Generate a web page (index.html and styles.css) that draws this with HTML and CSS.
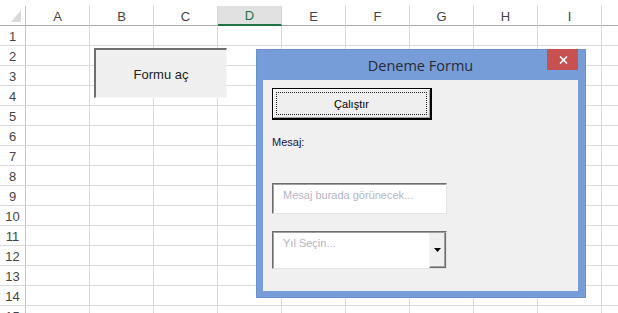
FILE: index.html
```html
<!DOCTYPE html>
<html lang="tr">
<head>
<meta charset="utf-8">
<title>Deneme Formu</title>
<link rel="stylesheet" href="styles.css">
</head>
<body>
<div class="sheet">
  <div class="colheads">
    <div class="corner">
      <svg width="11" height="14" viewBox="0 0 11 14"><polygon points="10,1 10,13 0,13" fill="#dadada"/></svg>
    </div>
    <div class="ch">A</div>
    <div class="ch">B</div>
    <div class="ch">C</div>
    <div class="ch active">D</div>
    <div class="ch">E</div>
    <div class="ch">F</div>
    <div class="ch">G</div>
    <div class="ch">H</div>
    <div class="ch">I</div>
    <div class="ch rest"></div>
  </div>
  <div class="row"><div class="rh">1</div><div class="cells"></div></div>
  <div class="row"><div class="rh">2</div><div class="cells"></div></div>
  <div class="row"><div class="rh">3</div><div class="cells"></div></div>
  <div class="row"><div class="rh">4</div><div class="cells"></div></div>
  <div class="row"><div class="rh">5</div><div class="cells"></div></div>
  <div class="row"><div class="rh">6</div><div class="cells"></div></div>
  <div class="row"><div class="rh">7</div><div class="cells"></div></div>
  <div class="row"><div class="rh">8</div><div class="cells"></div></div>
  <div class="row"><div class="rh">9</div><div class="cells"></div></div>
  <div class="row"><div class="rh">10</div><div class="cells"></div></div>
  <div class="row"><div class="rh">11</div><div class="cells"></div></div>
  <div class="row"><div class="rh">12</div><div class="cells"></div></div>
  <div class="row"><div class="rh">13</div><div class="cells"></div></div>
  <div class="row"><div class="rh">14</div><div class="cells"></div></div>
  <div class="row"><div class="rh">15</div><div class="cells"></div></div>
</div>

<div class="launch">Formu aç</div>

<div class="window">
  <div class="titlebar">
    <span class="title">Deneme Formu</span>
    <div class="close">
      <svg width="9" height="8" viewBox="0 0 9 8"><path d="M1 0.5 L8 7.5 M8 0.5 L1 7.5" stroke="#fff" stroke-width="1.6" fill="none"/></svg>
    </div>
  </div>
  <div class="client">
    <div class="run"><span class="focus">Çalıştır</span></div>
    <div class="label">Mesaj:</div>
    <div class="textbox">Mesaj burada görünecek...</div>
    <div class="combo">
      <div class="combo-text">Yıl Seçin...</div>
      <div class="combo-btn">
        <svg width="7" height="4" viewBox="0 0 7 4"><polygon points="0,0 7,0 3.5,4" fill="#000"/></svg>
      </div>
    </div>
  </div>
</div>
</body>
</html>
```

FILE: styles.css
```css
* { box-sizing: border-box; }

html, body {
  margin: 0;
  padding: 0;
  background: #fff;
  width: 618px;
  height: 313px;
  overflow: hidden;
}

.sheet {
  padding-top: 6px;
  font-family: "Liberation Sans", Arial, sans-serif;
  font-size: 13px;
  color: #444;
}

.colheads {
  display: grid;
  grid-template-columns: 26px repeat(9, 64px) 1fr;
  height: 20px;
}

.corner {
  border-right: 1px solid #c6c6c6;
  border-bottom: 1px solid #ababab;
  display: flex;
  justify-content: flex-end;
  align-items: flex-start;
  padding: 3px 3px 0 0;
}

.ch {
  border-right: 1px solid #d6d6d6;
  border-bottom: 1px solid #ababab;
  display: flex;
  align-items: center;
  justify-content: center;
  padding-top: 1px;
}

.ch.rest { border-right: none; }

.ch.active {
  background: #e1e1e1;
  color: #217346;
  border-bottom: 2px solid #217346;
}

.row {
  display: flex;
  height: 20px;
  border-bottom: 1px solid #dadada;
}

.rh {
  width: 26px;
  flex: none;
  border-right: 1px solid #c6c6c6;
  display: flex;
  align-items: center;
  justify-content: center;
  padding-top: 1px;
}

.cells {
  flex: 1;
  background: repeating-linear-gradient(to right, transparent 0 63px, #dadada 63px 64px);
}

/* launch button drawn on the sheet */
.launch {
  position: absolute;
  left: 94px;
  top: 48px;
  width: 133px;
  height: 50px;
  background: #efefef;
  border-top: 2px solid #6e6e6e;
  border-left: 2px solid #6e6e6e;
  border-right: 1px solid #f6f6f6;
  border-bottom: 1px solid #f6f6f6;
  display: flex;
  align-items: center;
  justify-content: center;
  font-family: "Liberation Sans", Arial, sans-serif;
  font-size: 13px;
  color: #222;
  padding-top: 1px;
}

/* the user form window */
.window {
  position: absolute;
  left: 256px;
  top: 49px;
  width: 330px;
  height: 249px;
  background: #779dd8;
  border: 1px solid #6b90cc;
  padding: 0 7px 6px 6px;
  display: flex;
  flex-direction: column;
}

.titlebar {
  position: relative;
  height: 30px;
  flex: none;
  display: flex;
  align-items: center;
  justify-content: center;
}

.title {
  font-family: "Open Sans", "Liberation Sans", sans-serif;
  font-size: 14.5px;
  color: #2a2a35;
  padding-top: 1px;
}

.close {
  position: absolute;
  right: 0;
  top: -1px;
  width: 31px;
  height: 21px;
  background: #c75050;
  display: flex;
  align-items: center;
  justify-content: center;
  padding-left: 2px;
}

.client {
  flex: 1;
  background: #f0f0f0;
  display: flex;
  flex-direction: column;
  align-items: flex-start;
  padding: 8px 0 0 9px;
  font-family: "Liberation Sans", Tahoma, sans-serif;
  font-size: 11px;
}

.run {
  width: 160px;
  height: 32px;
  background: #efefef;
  border: 1px solid #000;
  border-right-width: 2px;
  border-bottom-width: 2px;
  box-shadow: inset 1px 1px #fff, inset -1px -1px #a0a0a0;
  padding: 3px;
  display: flex;
}

.focus {
  flex: 1;
  border: 1px dotted #222;
  display: flex;
  align-items: center;
  justify-content: center;
  color: #000;
  padding-top: 1px;
}

.label {
  margin-top: 16px;
  line-height: 13px;
  color: #16164a;
}

.textbox {
  margin-top: 34px;
  width: 175px;
  height: 31px;
  background: #fff;
  border-top: 1px solid #6d6d6d;
  border-left: 1px solid #6d6d6d;
  border-right: 1px solid #e3e3e3;
  border-bottom: 1px solid #e3e3e3;
  box-shadow: inset 1px 1px #a0a0a0;
  padding: 5px 0 0 10px;
  color: #b4b4c6;
  line-height: 13px;
}

.combo {
  margin-top: 17px;
  width: 175px;
  height: 38px;
  background: #fff;
  border-top: 1px solid #6d6d6d;
  border-left: 1px solid #6d6d6d;
  border-right: 1px solid #e3e3e3;
  border-bottom: 1px solid #e3e3e3;
  box-shadow: inset 1px 1px #a0a0a0;
  display: flex;
}

.combo-text {
  flex: 1;
  padding: 5px 0 0 10px;
  color: #b4b4c6;
  line-height: 13px;
}

.combo-btn {
  width: 17px;
  flex: none;
  background: #efefef;
  border-left: 1px solid #f4f4f4;
  border-right: 1px solid #6d6d6d;
  border-bottom: 1px solid #6d6d6d;
  box-shadow: inset -1px -1px #a0a0a0;
  display: flex;
  align-items: center;
  justify-content: center;
  margin-top: 1px;
}
```
